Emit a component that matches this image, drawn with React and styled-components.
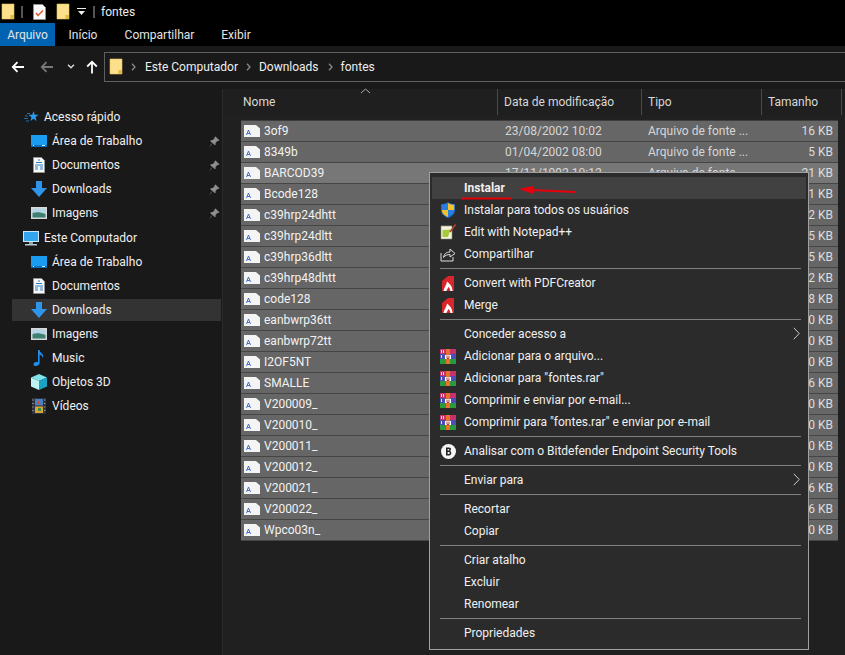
import React from "react";
import styled, { createGlobalStyle } from "styled-components";

const Global = createGlobalStyle`
  html, body { margin: 0; padding: 0; background: #000; overflow: hidden; }
  * { box-sizing: border-box; }
  #root { width: 845px; height: 655px; }
`;

const Shell = styled.div`
  position: relative;
  width: 845px;
  height: 655px;
  display: flex;
  flex-direction: column;
  background: #202020;
  color: #fff;
  font-family: Roboto, "Noto Sans", sans-serif;
  font-size: 12px;
  overflow: hidden;
`;

const TitleBar = styled.div`
  height: 23px;
  background: #000;
  display: flex;
  align-items: center;
  padding-left: 1px;
`;
const TitleSep = styled.span`
  width: 2px;
  height: 12px;
  background: #555;
  margin: ${(p) => p.$m};
`;
const QuickGap = styled.span`
  width: ${(p) => p.$w}px;
`;
const TitleText = styled.span`
  color: #eee;
  margin-left: 6px;
`;

const Tabs = styled.div`
  height: 23px;
  background: #000;
  display: flex;
`;
const Tab = styled.div`
  width: ${(p) => p.$w}px;
  display: flex;
  align-items: center;
  justify-content: center;
  color: #e4e4e4;
  background: ${(p) => (p.$active ? "#0063b1" : "transparent")};
`;

const NavBar = styled.div`
  height: 43px;
  background: #191919;
  display: flex;
  align-items: center;
  padding: 0 0 2px 11px;
`;
const NavIcon = styled.span`
  display: flex;
  width: ${(p) => p.$w}px;
  margin-left: ${(p) => p.$ml ?? 0}px;
  justify-content: center;
`;
const AddressBox = styled.div`
  flex: 1;
  height: 30px;
  margin-left: 6px;
  margin-right: -2px;
  border: 1px solid #5f5f5f;
  display: flex;
  align-items: center;
  padding-left: 4px;
  color: #eee;
`;
const Crumb = styled.span``;
const Chev = styled.span`
  display: flex;
  margin: 0 ${(p) => p.$r ?? 8}px 0 ${(p) => p.$l ?? 8}px;
`;

const Body = styled.div`
  flex: 1;
  display: flex;
  min-height: 0;
`;
const Sidebar = styled.nav`
  width: 223px;
  background: #191919;
  border-right: 1px solid #2a2a2a;
  padding: 16px 1px 0 12px;
`;
const SideGroup = styled.div`
  margin-bottom: 1px;
`;
const SideRow = styled.div`
  height: ${(p) => (p.$sel ? 22 : 24)}px;
  margin: ${(p) => (p.$sel ? "1px 0" : "0")};
  display: flex;
  align-items: center;
  padding-left: ${(p) => (p.$head ? 10 : 18)}px;
  padding-right: 1px;
  background: ${(p) => (p.$sel ? "#333" : "transparent")};
  color: #f0f0f0;
`;
const SideIcon = styled.span`
  width: 18px;
  height: 16px;
  display: flex;
  align-items: center;
  justify-content: center;
  margin-right: 4px;
`;
const Pin = styled.span`
  margin-left: auto;
  display: flex;
`;

const Main = styled.main`
  flex: 1;
  background: #202020;
  padding-left: 1px;
  position: relative;
`;
const HeaderRow = styled.div`
  height: 26px;
  display: flex;
  color: #d8d8d8;
  background: #1f1f1f;
  padding-left: 13px;
`;
const HeaderCell = styled.div`
  width: ${(p) => p.$w}px;
  flex: none;
  padding-left: 6px;
  display: flex;
  align-items: center;
  border-right: 1px solid #4a4a4a;
`;
const SortCaret = styled.svg`
  position: absolute;
  left: 137px;
  top: -1px;
`;
const FileList = styled.div`
  margin: 5px 7px 0 17px;
  border-top: 1px solid #3d3d3d;
`;
const FileRow = styled.div`
  height: 21px;
  display: grid;
  grid-template-columns: 261px 143px 120px 1fr;
  align-items: center;
  padding: 0 5px 0 3px;
  background: ${(p) => (p.$hover ? "#777" : "#666")};
  border-bottom: 1px solid #454545;
`;
const NameCell = styled.span`
  display: flex;
  align-items: center;
  gap: 4px;
  color: #f2f2f2;
`;
const DimCell = styled.span`
  color: #d6d6d6;
  white-space: nowrap;
  overflow: hidden;
`;
const SizeCell = styled.span`
  color: #ddd;
  text-align: right;
`;

const Menu = styled.div`
  position: absolute;
  left: 429px;
  top: 172px;
  width: 380px;
  height: 478px;
  background: #2b2b2b;
  border: 1px solid #a0a0a0;
  padding: 4px 2px;
  color: #f0f0f0;
`;
const MenuItem = styled.div`
  height: 22px;
  display: flex;
  align-items: center;
  position: relative;
  padding-left: 32px;
  background: ${(p) => (p.$hl ? "#414141" : "transparent")};
  font-weight: ${(p) => (p.$hl ? 700 : 400)};
  white-space: nowrap;
`;
const MenuIcon = styled.span`
  position: absolute;
  left: 7px;
  top: 2px;
  width: 18px;
  height: 18px;
  display: flex;
  align-items: center;
  justify-content: center;
`;
const MenuSep = styled.div`
  height: 7px;
  display: flex;
  align-items: center;
  padding: 0 5px 0 8px;
  &::before {
    content: "";
    flex: 1;
    height: 1px;
    background: #808080;
  }
`;
const SubArrow = styled.svg`
  position: absolute;
  right: 6px;
  top: 4px;
`;
const Annotation = styled.svg`
  position: absolute;
  left: 29px;
  top: 5px;
  pointer-events: none;
`;

/* ---------- icons ---------- */
const Folder = () => (
  <svg width="14" height="17" viewBox="0 0 14 17">
    <path d="M1 1h12v15H1z" fill="#fde08c" stroke="#e6c263" strokeWidth=".6" />
    <path d="M9.500 12H13v4H9.500z" fill="#e3b93f" />
  </svg>
);
const Checklist = () => (
  <svg width="13" height="16" viewBox="0 0 13 16">
    <path d="M.5.5h9l3 3v12H.5z" fill="#fafafa" stroke="#999" strokeWidth=".7" />
    <path d="M3 9l2 2.500L10 6.500" fill="none" stroke="#e2572b" strokeWidth="1.500" />
  </svg>
);
const QuickDown = () => (
  <svg width="9" height="8" viewBox="0 0 9 8">
    <path d="M0 0h9v1H0z" fill="#eee" />
    <path d="M1 3h7L4.500 7z" fill="#eee" />
  </svg>
);
const ArrowL = ({ color = "#fff" }) => (
  <svg width="14" height="12" viewBox="0 0 14 12">
    <path d="M13 6H2M6.500 1.200L1.800 6l4.700 4.800" fill="none" stroke={color} strokeWidth="1.800" />
  </svg>
);
const ArrowUp = () => (
  <svg width="12" height="14" viewBox="0 0 12 14">
    <path d="M6 13.500V2M1.200 6.500L6 1.800l4.800 4.700" fill="none" stroke="#fff" strokeWidth="1.800" />
  </svg>
);
const SmallDown = () => (
  <svg width="8" height="5" viewBox="0 0 8 5">
    <path d="M1 .8l3 3 3-3" fill="none" stroke="#ddd" strokeWidth="1.400" />
  </svg>
);
const ChevR = () => (
  <svg width="5" height="8" viewBox="0 0 5 8">
    <path d="M1 .8l3 3.200-3 3.200" fill="none" stroke="#8a8a8a" strokeWidth="1.300" />
  </svg>
);
const StarIcon = () => (
  <svg width="15" height="14" viewBox="0 0 15 14">
    <path d="M9.500 1l1.200 3.800h3.800l-3 2.400 1.100 3.800-3.100-2.300-3.100 2.300 1.100-3.800-3-2.400h3.800z" fill="#2b9df0" />
    <path d="M0 8.500h4M1 6h3M2 11h3M3 3.500h3" stroke="#1f6fb0" strokeWidth="1" />
  </svg>
);
const Desktop = () => (
  <svg width="16" height="12" viewBox="0 0 16 12">
    <path d="M0 0h16v12H0z" fill="#1a9cf0" />
    <path d="M0 10h16v2H0z" fill="#0b6fc0" />
    <path d="M2 10.500h1M11 10.500h3" stroke="#d8f0ff" />
  </svg>
);
const Docs = () => (
  <svg width="12" height="16" viewBox="0 0 12 16">
    <path d="M.5.5h8l3 3v12H.500z" fill="#f8f8f8" stroke="#999" strokeWidth=".7" />
    <path d="M5 3h2M3 5.500h6M2 8h8M2 10h3M7 10h3M2 12h3M7 12h3" stroke="#2a7fc8" strokeWidth="1" />
  </svg>
);
const Down = () => (
  <svg width="16" height="16" viewBox="0 0 16 16">
    <path d="M5 0h6v7h5l-8 9-8-9h5z" fill="#2f95ea" />
  </svg>
);
const Pics = () => (
  <svg width="16" height="12" viewBox="0 0 16 12">
    <path d="M0 0h16v12H0z" fill="#d8d8d8" />
    <path d="M1.500 1.500h13v9h-13z" fill="#b5d4e6" />
    <path d="M1.500 6c4-1.500 8-1 13 1v3.500h-13z" fill="#3f8070" />
  </svg>
);
const Computer = () => (
  <svg width="16" height="15" viewBox="0 0 16 15">
    <path d="M0 0h16v11H0z" fill="#cfe6f5" />
    <path d="M1 1h14v9H1z" fill="#33a4ee" />
    <path d="M6 11h4v2H6z" fill="#8ca3b2" />
    <path d="M2 13h12v1.500H2z" fill="#b9c9d4" />
  </svg>
);
const Music = () => (
  <svg width="12" height="16" viewBox="0 0 12 16">
    <path d="M5 0h1.500c.3 3 5 4 3.500 8-.5-2-2-3-3.400-3.200V13c0 2-2 3-4 3S0 14.500.8 13.200C1.600 12 3.500 11.700 5 12.300z" fill="#1f8fec" />
  </svg>
);
const Cube = () => (
  <svg width="16" height="16" viewBox="0 0 16 16">
    <path d="M8 0l8 3.500L8 7 0 3.500z" fill="#7fe3ea" />
    <path d="M0 3.500L8 7v9l-8-3.500z" fill="#bdf3f3" />
    <path d="M16 3.500L8 7v9l8-3.500z" fill="#1ba3c4" />
  </svg>
);
const Video = () => (
  <svg width="14" height="16" viewBox="0 0 14 16">
    <path d="M0 0h14v16H0z" fill="#2c3240" />
    <path d="M3 1h8v6.500H3z" fill="#4a7fc0" />
    <path d="M3 8.500h8V15H3z" fill="#d9a62e" />
    <path d="M5 3h3v3H5z" fill="#d94c3a" />
    <path d="M6 10h3v3H6z" fill="#3c8d4a" />
    <path d="M1 1.500v1M1 5v1M1 8.500v1M1 12v1M12.800 1.500v1M12.800 5v1M12.800 8.500v1M12.800 12v1" stroke="#ccc" />
  </svg>
);
const PinIcon = () => (
  <svg width="11" height="11" viewBox="0 0 11 11">
    <path d="M6.500.5l4 4-1 .6-.8-.3L6.500 7l.2 1.500-.8.8-2.200-2.200L.8 10.500l-.3-.3L3.300 7 1.200 4.900 2 4.100l1.500.2 2.200-2.200-.3-.8z" fill="#8f8f8f" />
  </svg>
);
const FontFile = () => (
  <svg width="16" height="12" viewBox="0 0 16 12">
    <path d="M0 0h12l4 3.500V12H0z" fill="#f4f4f4" />
    <path d="M2.500 10L4.500 5l2 5M3.200 8.500h2.600" fill="none" stroke="#2f62c4" strokeWidth=".9" />
  </svg>
);
const Shield = () => (
  <svg width="14" height="16" viewBox="0 0 14 16">
    <path d="M7 0c2 1.500 4 2 7 2v6c0 4-3 6.500-7 8-4-1.500-7-4-7-8V2c3 0 5-.5 7-2z" fill="#1c68c8" />
    <path d="M7 1v7H.8V2.800C3 2.800 5.500 2 7 1z" fill="#2a7fdc" />
    <path d="M7 1c1.500 1 4 1.800 6.200 1.800V8H7z" fill="#f5c12e" />
    <path d="M.8 8H7v7C3.500 13.600.9 11.500.8 8z" fill="#f5c12e" />
    <path d="M7 8h6.200C13 11.500 10.500 13.600 7 15z" fill="#2a7fdc" />
  </svg>
);
const NotepadPP = () => (
  <svg width="16" height="16" viewBox="0 0 16 16">
    <path d="M1 2h11v13H1z" fill="#f3f3df" stroke="#8a8a6a" strokeWidth=".6" />
    <path d="M2.500 6l8-.5L8 13H2.500z" fill="#a6cb3a" />
    <path d="M2 2v-1M4 2v-1M6 2v-1M8 2v-1M10 2v-1" stroke="#666" />
    <path d="M15.500.5L10 8" stroke="#b5432a" strokeWidth="1.600" />
  </svg>
);
const Share = () => (
  <svg width="16" height="15" viewBox="0 0 16 15">
    <path d="M1 6v8h12v-4" fill="none" stroke="#ddd" strokeWidth="1" />
    <path d="M3.500 10.500C4 6.500 7 5 10 5V2l5 4.500L10 10V7.500c-2.500 0-5 .8-6.500 3z" fill="none" stroke="#ddd" strokeWidth="1" />
  </svg>
);
const Pdf = () => (
  <svg width="12" height="15" viewBox="0 0 12 15">
    <path d="M0 5L6 0h6v15H0z" fill="#d9262b" />
    <path d="M1.500 15C2 11 4.500 9.500 5 5.500c2.500 2 5.500 5 5.500 9.500H8.300C8.200 13 7.300 11.600 6.300 11 6 12.800 4.800 13.200 4.500 15z" fill="#fff" />
  </svg>
);
const Rar = () => (
  <svg width="16" height="15" viewBox="0 0 16 15">
    <path d="M0 0h16v5H0z" fill="#c8326a" />
    <path d="M0 5h16v5H0z" fill="#4a4fb8" />
    <path d="M0 10h16v5H0z" fill="#2a9a3c" />
    <path d="M6 0h4v15H6z" fill="#e8722a" />
    <path d="M5 6h6v4H5z" fill="#fff" />
    <path d="M7 6.500v3h2v-3" fill="none" stroke="#a33" />
    <path d="M1 1h1v3H1zM3 1h1v3H3zM1 6h1v3H1z" fill="#f5e58a" />
  </svg>
);
const Bitdefender = () => (
  <svg width="15" height="15" viewBox="0 0 15 15">
    <circle cx="7.500" cy="7.500" r="7.500" fill="#f5f5f5" />
    <path d="M5 3.500h3.200c2.300 0 2.300 3 .6 3.600 2.200.5 2 4.400-.6 4.400H5z" fill="#222" />
    <path d="M6.600 5v1.500h1.200c.8 0 .8-1.500 0-1.500zM6.600 8v2h1.400c1 0 1-2 0-2z" fill="#f5f5f5" />
  </svg>
);

/* ---------- data ---------- */
const quick = [
  ["Área de Trabalho", Desktop],
  ["Documentos", Docs],
  ["Downloads", Down],
  ["Imagens", Pics],
];
const computer = [
  ["Área de Trabalho", Desktop],
  ["Documentos", Docs],
  ["Downloads", Down, true],
  ["Imagens", Pics],
  ["Music", Music],
  ["Objetos 3D", Cube],
  ["Vídeos", Video],
];
const files = [
  ["3of9", "23/08/2002 10:02", "Arquivo de fonte ...", "16 KB"],
  ["8349b", "01/04/2002 08:00", "Arquivo de fonte ...", "5 KB"],
  ["BARCOD39", "17/11/1992 10:12", "Arquivo de fonte ...", "21 KB"],
  ["Bcode128", "", "", "1 KB"],
  ["c39hrp24dhtt", "", "", "2 KB"],
  ["c39hrp24dltt", "", "", "5 KB"],
  ["c39hrp36dltt", "", "", "5 KB"],
  ["c39hrp48dhtt", "", "", "2 KB"],
  ["code128", "", "", "8 KB"],
  ["eanbwrp36tt", "", "", "0 KB"],
  ["eanbwrp72tt", "", "", "0 KB"],
  ["I2OF5NT", "", "", "0 KB"],
  ["SMALLE", "", "", "6 KB"],
  ["V200009_", "", "", "0 KB"],
  ["V200010_", "", "", "0 KB"],
  ["V200011_", "", "", "0 KB"],
  ["V200012_", "", "", "0 KB"],
  ["V200021_", "", "", "6 KB"],
  ["V200022_", "", "", "6 KB"],
  ["Wpco03n_", "", "", "0 KB"],
];
const menu = [
  { t: "Instalar", hl: true },
  { t: "Instalar para todos os usuários", I: Shield },
  { t: "Edit with Notepad++", I: NotepadPP },
  { t: "Compartilhar", I: Share },
  "-",
  { t: "Convert with PDFCreator", I: Pdf },
  { t: "Merge", I: Pdf },
  "-",
  { t: "Conceder acesso a", sub: true },
  { t: "Adicionar para o arquivo...", I: Rar },
  { t: 'Adicionar para "fontes.rar"', I: Rar },
  { t: "Comprimir e enviar por e-mail...", I: Rar },
  { t: 'Comprimir para "fontes.rar" e enviar por e-mail', I: Rar },
  "-",
  { t: "Analisar com o Bitdefender Endpoint Security Tools", I: Bitdefender },
  "-",
  { t: "Enviar para", sub: true },
  "-",
  { t: "Recortar" },
  { t: "Copiar" },
  "-",
  { t: "Criar atalho" },
  { t: "Excluir" },
  { t: "Renomear" },
  "-",
  { t: "Propriedades" },
];

export default function App() {
  return (
    <Shell>
      <Global />
      <TitleBar>
        <Folder />
        <TitleSep $m="0 0 0 6px" />
        <QuickGap $w={10} />
        <Checklist />
        <QuickGap $w={10} />
        <Folder />
        <QuickGap $w={7} />
        <QuickDown />
        <TitleSep $m="0 0 0 7px" />
        <TitleText>fontes</TitleText>
      </TitleBar>
      <Tabs>
        <Tab $w={55} $active>Arquivo</Tab>
        <Tab $w={56}>Início</Tab>
        <Tab $w={97}>Compartilhar</Tab>
        <Tab $w={56}>Exibir</Tab>
      </Tabs>
      <NavBar>
        <NavIcon $w={14}><ArrowL /></NavIcon>
        <NavIcon $w={14} $ml={15}><ArrowL color="#777" /></NavIcon>
        <NavIcon $w={8} $ml={13}><SmallDown /></NavIcon>
        <NavIcon $w={12} $ml={11}><ArrowUp /></NavIcon>
        <AddressBox>
          <Folder />
          <Chev $l={8} $r={9}><ChevR /></Chev>
          <Crumb>Este Computador</Crumb>
          <Chev><ChevR /></Chev>
          <Crumb>Downloads</Crumb>
          <Chev $l={9}><ChevR /></Chev>
          <Crumb>fontes</Crumb>
        </AddressBox>
      </NavBar>
      <Body>
        <Sidebar>
          <SideGroup>
            <SideRow $head>
              <SideIcon><StarIcon /></SideIcon>Acesso rápido
            </SideRow>
            {quick.map(([t, I]) => (
              <SideRow key={t}>
                <SideIcon><I /></SideIcon>
                {t}
                <Pin><PinIcon /></Pin>
              </SideRow>
            ))}
          </SideGroup>
          <SideGroup>
            <SideRow $head>
              <SideIcon><Computer /></SideIcon>Este Computador
            </SideRow>
            {computer.map(([t, I, sel]) => (
              <SideRow key={t} $sel={sel}>
                <SideIcon><I /></SideIcon>
                {t}
              </SideRow>
            ))}
          </SideGroup>
        </Sidebar>
        <Main>
          <SortCaret width="11" height="6" viewBox="0 0 11 6">
            <path d="M1 5l4.500-4L10 5" fill="none" stroke="#aaa" />
          </SortCaret>
          <HeaderRow>
            <HeaderCell $w={261}>Nome</HeaderCell>
            <HeaderCell $w={144}>Data de modificação</HeaderCell>
            <HeaderCell $w={120}>Tipo</HeaderCell>
            <HeaderCell $w={80}>Tamanho</HeaderCell>
          </HeaderRow>
          <FileList>
            {files.map(([n, d, ty, s]) => (
              <FileRow key={n} $hover={n === "BARCOD39"}>
                <NameCell><FontFile />{n}</NameCell>
                <DimCell>{d}</DimCell>
                <DimCell>{ty}</DimCell>
                <SizeCell>{s}</SizeCell>
              </FileRow>
            ))}
          </FileList>
        </Main>
      </Body>
      <Menu>
        {menu.map((m, i) =>
          m === "-" ? (
            <MenuSep key={i} />
          ) : (
            <MenuItem key={i} $hl={m.hl}>
              {m.I && <MenuIcon><m.I /></MenuIcon>}
              {m.t}
              {m.sub && (
                <SubArrow width="7" height="13" viewBox="0 0 7 13">
                  <path d="M.8 .8l5.400 5.700-5.400 5.700" fill="none" stroke="#ccc" />
                </SubArrow>
              )}
            </MenuItem>
          )
        )}
        <Annotation width="120" height="26" viewBox="0 0 120 26">
          <path d="M116 14L72 12" stroke="#e8000a" strokeWidth="1.800" />
          <path d="M60 11l14-3 0 8z" fill="#e8000a" />
          <path d="M2 20.500h51" stroke="#e8000a" strokeWidth="2.200" />
        </Annotation>
      </Menu>
    </Shell>
  );
}
